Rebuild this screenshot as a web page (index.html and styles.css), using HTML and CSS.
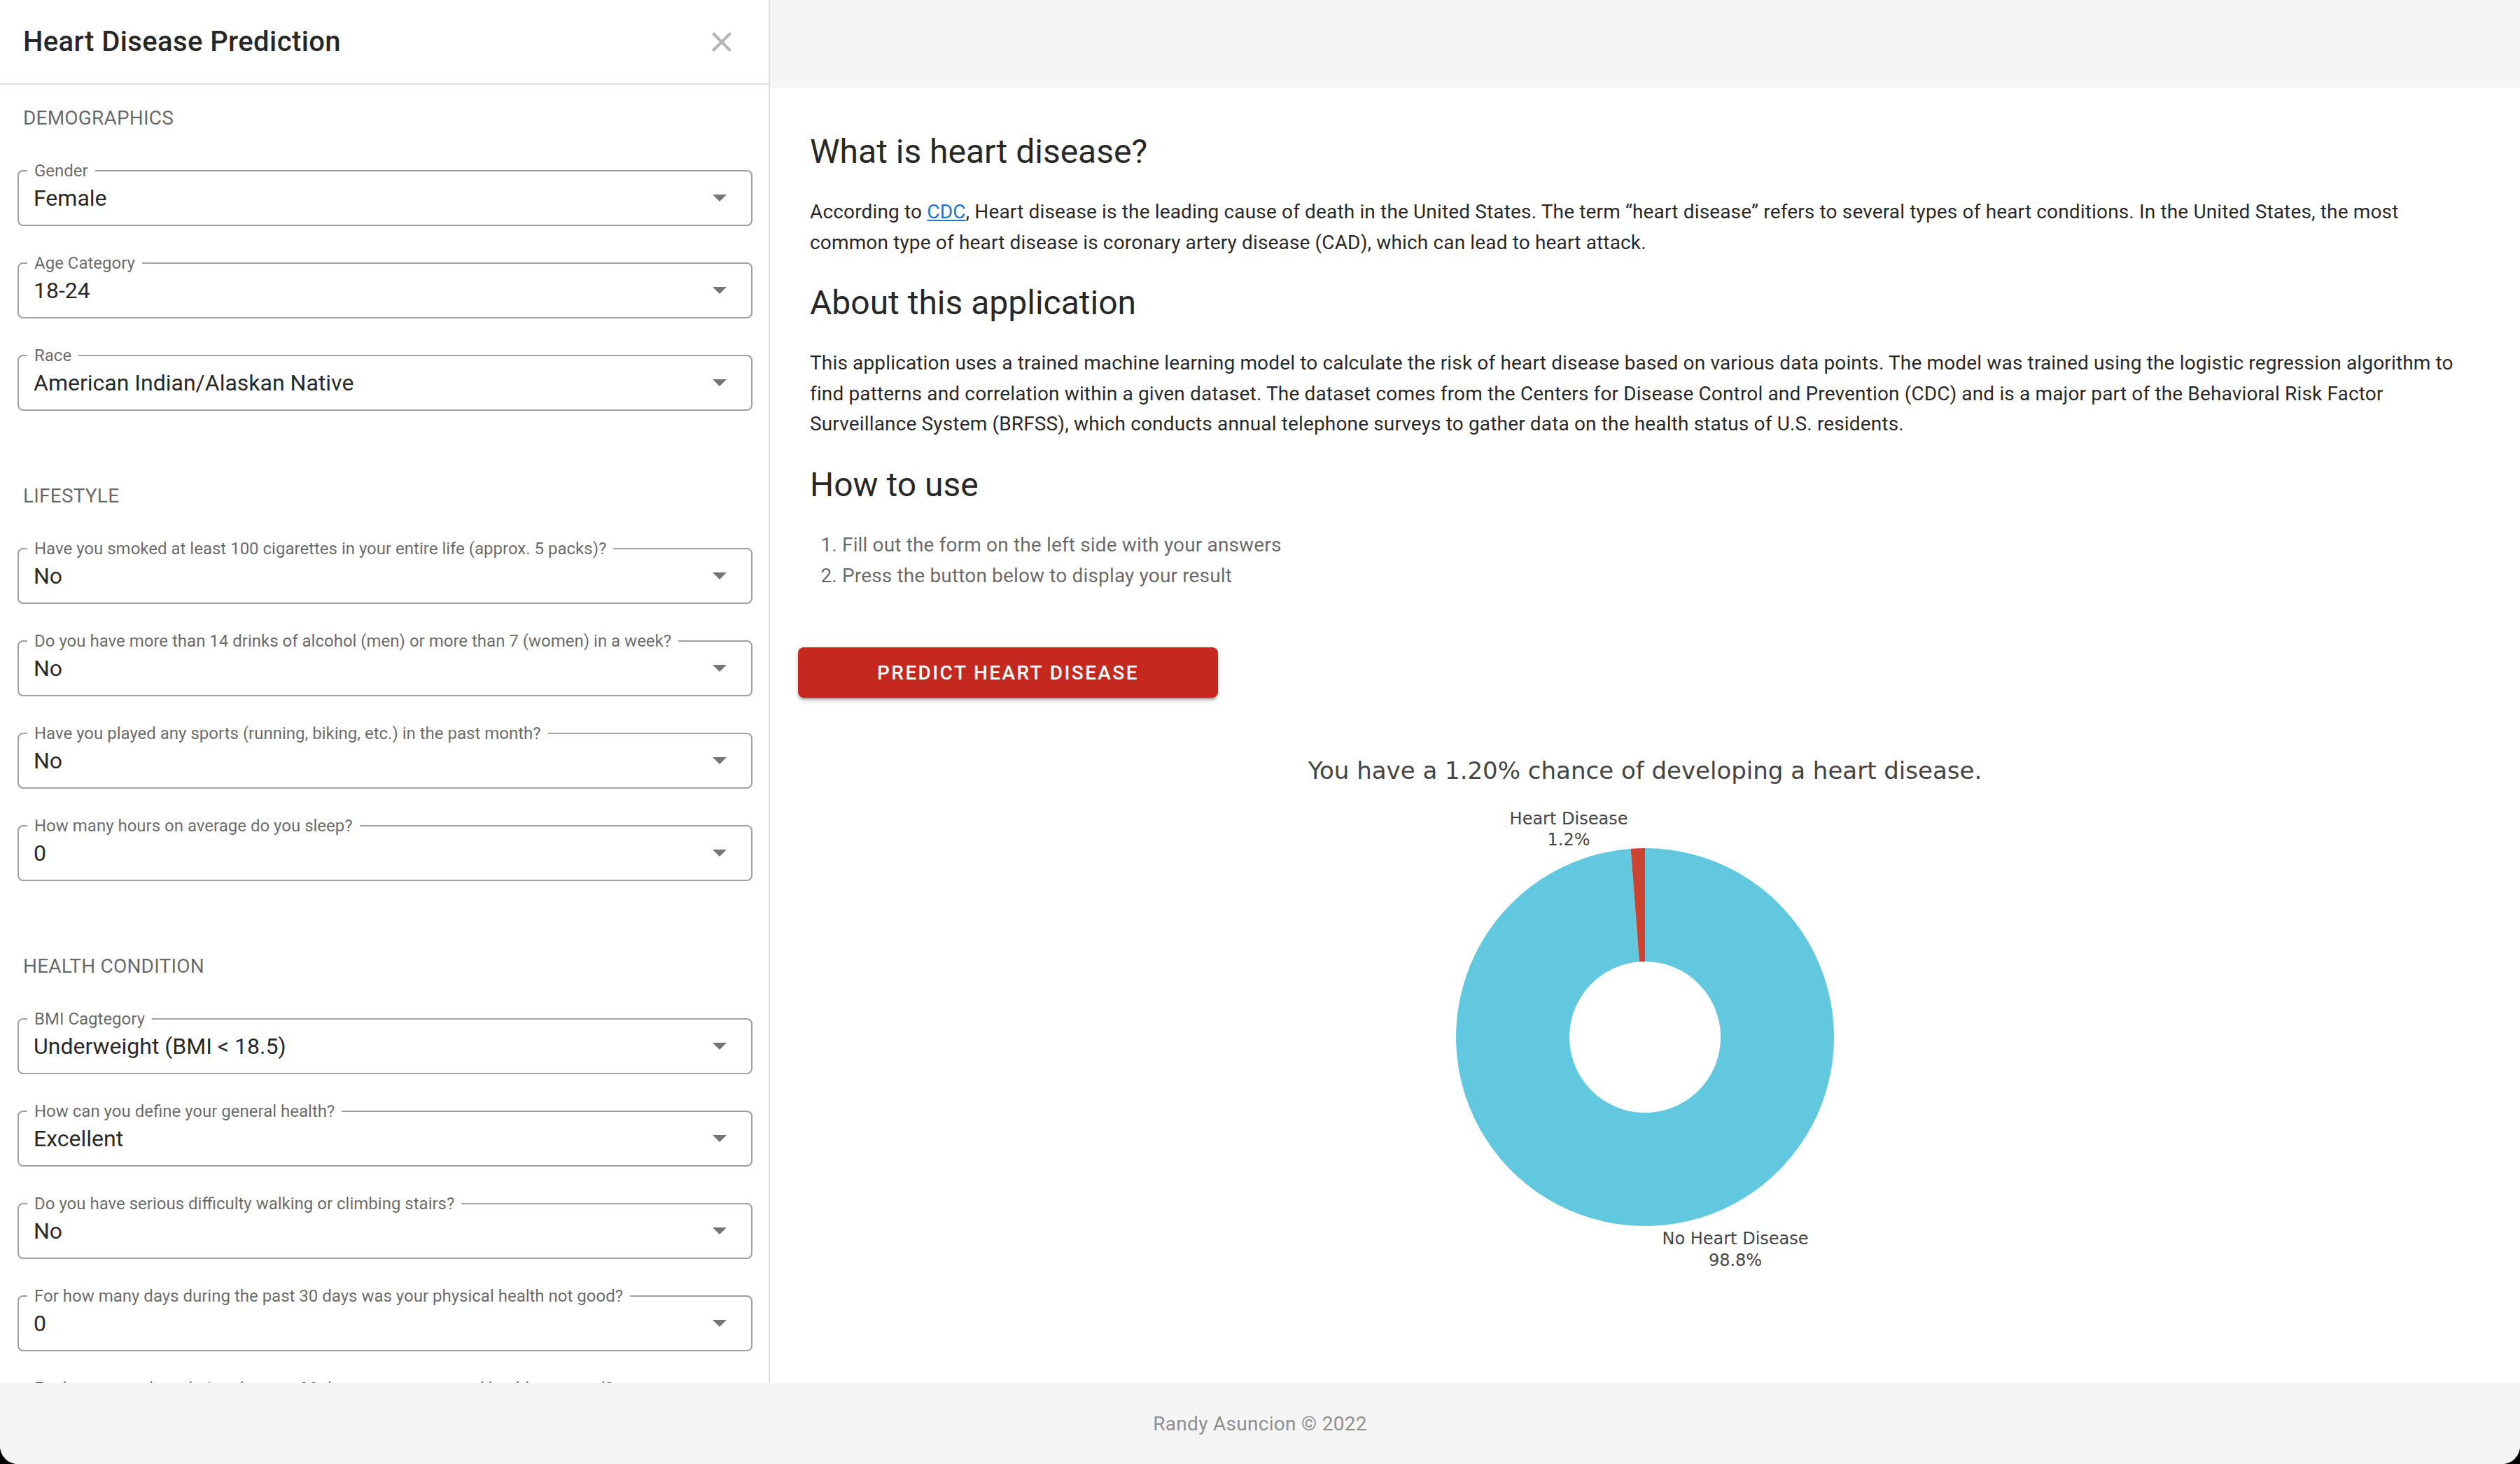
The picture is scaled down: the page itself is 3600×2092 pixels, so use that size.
FILE: index.html
```html
<!DOCTYPE html>
<html lang="en">
<head>
<meta charset="utf-8">
<title>Heart Disease Prediction</title>
<link rel="stylesheet" href="styles.css">
</head>
<body>
<div class="app">
  <div class="layout">
    <aside class="drawer">
      <div class="drawer-header">
        <h1 class="drawer-title">Heart Disease Prediction</h1>
        <button class="close-btn" aria-label="close">
          <svg viewBox="0 0 24 24"><path d="M19 6.41 17.59 5 12 10.59 6.41 5 5 6.41 10.59 12 5 17.59 6.41 19 12 13.41 17.59 19 19 17.59 13.41 12z"/></svg>
        </button>
      </div>
      <div class="drawer-body">
        <section class="form-section">
          <h2 class="section-title">Demographics</h2>
          <div class="field"><span class="field-label">Gender</span><span class="field-value">Female</span><svg class="arrow" viewBox="7 10 10 5"><path d="M7 10l5 5 5-5z"/></svg></div>
          <div class="field"><span class="field-label">Age Category</span><span class="field-value">18-24</span><svg class="arrow" viewBox="7 10 10 5"><path d="M7 10l5 5 5-5z"/></svg></div>
          <div class="field"><span class="field-label">Race</span><span class="field-value">American Indian/Alaskan Native</span><svg class="arrow" viewBox="7 10 10 5"><path d="M7 10l5 5 5-5z"/></svg></div>
        </section>
        <section class="form-section">
          <h2 class="section-title">Lifestyle</h2>
          <div class="field"><span class="field-label">Have you smoked at least 100 cigarettes in your entire life (approx. 5 packs)?</span><span class="field-value">No</span><svg class="arrow" viewBox="7 10 10 5"><path d="M7 10l5 5 5-5z"/></svg></div>
          <div class="field"><span class="field-label">Do you have more than 14 drinks of alcohol (men) or more than 7 (women) in a week?</span><span class="field-value">No</span><svg class="arrow" viewBox="7 10 10 5"><path d="M7 10l5 5 5-5z"/></svg></div>
          <div class="field"><span class="field-label">Have you played any sports (running, biking, etc.) in the past month?</span><span class="field-value">No</span><svg class="arrow" viewBox="7 10 10 5"><path d="M7 10l5 5 5-5z"/></svg></div>
          <div class="field"><span class="field-label">How many hours on average do you sleep?</span><span class="field-value">0</span><svg class="arrow" viewBox="7 10 10 5"><path d="M7 10l5 5 5-5z"/></svg></div>
        </section>
        <section class="form-section">
          <h2 class="section-title">Health Condition</h2>
          <div class="field"><span class="field-label">BMI Cagtegory</span><span class="field-value">Underweight (BMI &lt; 18.5)</span><svg class="arrow" viewBox="7 10 10 5"><path d="M7 10l5 5 5-5z"/></svg></div>
          <div class="field"><span class="field-label">How can you define your general health?</span><span class="field-value">Excellent</span><svg class="arrow" viewBox="7 10 10 5"><path d="M7 10l5 5 5-5z"/></svg></div>
          <div class="field"><span class="field-label">Do you have serious difficulty walking or climbing stairs?</span><span class="field-value">No</span><svg class="arrow" viewBox="7 10 10 5"><path d="M7 10l5 5 5-5z"/></svg></div>
          <div class="field"><span class="field-label">For how many days during the past 30 days was your physical health not good?</span><span class="field-value">0</span><svg class="arrow" viewBox="7 10 10 5"><path d="M7 10l5 5 5-5z"/></svg></div>
          <div class="field"><span class="field-label">For how many days during the past 30 days was your mental health not good?</span><span class="field-value">0</span><svg class="arrow" viewBox="7 10 10 5"><path d="M7 10l5 5 5-5z"/></svg></div>
        </section>
      </div>
    </aside>
    <main class="main">
      <div class="topbar"></div>
      <div class="content">
        <h2 class="heading">What is heart disease?</h2>
        <p class="text">According to <a class="link" href="#">CDC</a>, Heart disease is the leading cause of death in the United States. The term “heart disease” refers to several types of heart conditions. In the United States, the most common type of heart disease is coronary artery disease (CAD), which can lead to heart attack.</p>
        <h2 class="heading">About this application</h2>
        <p class="text">This application uses a trained machine learning model to calculate the risk of heart disease based on various data points. The model was trained using the logistic regression algorithm to find patterns and correlation within a given dataset. The dataset comes from the Centers for Disease Control and Prevention (CDC) and is a major part of the Behavioral Risk Factor Surveillance System (BRFSS), which conducts annual telephone surveys to gather data on the health status of U.S. residents.</p>
        <h2 class="heading">How to use</h2>
        <ol class="steps">
          <li>Fill out the form on the left side with your answers</li>
          <li>Press the button below to display your result</li>
        </ol>
        <button class="predict-btn">Predict Heart Disease</button>
        <svg class="chart" viewBox="0 0 1100 800" width="1100" height="800">
          <text class="chart-title" x="550" y="72">You have a 1.20% chance of developing a heart disease.</text>
          <path class="slice-no" d="M550,171 A270,270 0 1 1 529.66,171.77 L541.86,333.31 A108,108 0 1 0 550,333 Z"/>
          <path class="slice-yes" d="M550,171 A270,270 0 0 0 529.66,171.77 L541.86,333.31 A108,108 0 0 1 550,333 Z"/>
          <text class="chart-label" x="441" y="136.5">Heart Disease</text>
          <text class="chart-label" x="441" y="166.5">1.2%</text>
          <text class="chart-label" x="679" y="737">No Heart Disease</text>
          <text class="chart-label" x="679" y="767.5">98.8%</text>
        </svg>
      </div>
    </main>
  </div>
  <footer class="footer">Randy Asuncion © 2022</footer>
</div>
</body>
</html>
```

FILE: styles.css
```css
html, body {
  margin: 0;
  padding: 0;
  background: #000;
}

body {
  font-family: "Roboto", "Liberation Sans", sans-serif;
  color: rgba(0, 0, 0, 0.87);
}

.app {
  width: 3600px;
  height: 2092px;
  display: flex;
  flex-direction: column;
  background: #fff;
  border-radius: 0 0 26px 26px;
  overflow: hidden;
}

.layout {
  flex: 1;
  display: flex;
  min-height: 0;
}

/* Drawer */
.drawer {
  width: 1100px;
  flex: none;
  box-sizing: border-box;
  border-right: 2px solid #e0e0e0;
  background: #fff;
  overflow: hidden;
}

.drawer-header {
  height: 119px;
  border-bottom: 2px solid #e0e0e0;
  display: flex;
  align-items: center;
  justify-content: space-between;
  padding: 0 27px 0 33px;
}

.drawer-title {
  margin: 0;
  font-size: 40px;
  font-weight: 500;
  letter-spacing: 0.4px;
  line-height: 64px;
}

.close-btn {
  width: 80px;
  height: 80px;
  padding: 16px;
  border: none;
  background: none;
  display: flex;
  align-items: center;
  justify-content: center;
}

.close-btn svg {
  width: 48px;
  height: 48px;
  fill: rgba(0, 0, 0, 0.3);
}

.drawer-body {
  padding-top: 26px;
}

.form-section + .form-section {
  margin-top: 100px;
}

.section-title {
  margin: 0;
  padding-left: 33px;
  font-size: 28px;
  font-weight: 400;
  line-height: 44px;
  letter-spacing: 0.2px;
  text-transform: uppercase;
  color: rgba(0, 0, 0, 0.6);
}

.field {
  position: relative;
  height: 80px;
  box-sizing: border-box;
  margin: 52px 23px 0 25px;
  border: 2px solid #a0a0a0;
  border-radius: 8px;
  display: flex;
  align-items: center;
  padding: 0 35px 0 21px;
}

.field-label {
  position: absolute;
  left: 12px;
  top: -15px;
  padding: 0 10px;
  background: #fff;
  font-size: 24px;
  line-height: 28px;
  color: rgba(0, 0, 0, 0.6);
  white-space: nowrap;
}

.field-value {
  flex: 1;
  font-size: 32px;
  line-height: 46px;
  color: rgba(0, 0, 0, 0.87);
}

.arrow {
  width: 20px;
  height: 10px;
  fill: rgba(0, 0, 0, 0.54);
  flex: none;
}

/* Main */
.main {
  flex: 1;
  min-width: 0;
  display: flex;
  flex-direction: column;
  background: #f5f5f5;
}

.topbar {
  height: 126px;
  flex: none;
}

.content {
  flex: 1;
  background: #fff;
  padding: 59px 57px 0;
  overflow: hidden;
}

.heading {
  margin: 0 0 32px;
  font-size: 48px;
  font-weight: 400;
  line-height: 64px;
  color: rgba(0, 0, 0, 0.87);
}

.text {
  margin: 0 0 33px;
  max-width: 2373px;
  font-size: 28px;
  line-height: 43.6px;
  letter-spacing: 0.15px;
}

.link {
  color: #1976d2;
  text-decoration: underline;
}

.steps {
  margin: 0;
  padding-left: 46px;
  font-size: 28px;
  line-height: 43.6px;
  letter-spacing: 0.15px;
  color: rgba(0, 0, 0, 0.6);
}

.predict-btn {
  display: block;
  width: 600px;
  height: 72px;
  margin: 81px 0 0 -17px;
  border: none;
  border-radius: 8px;
  background: #c4281e;
  color: #fff;
  font-family: "Roboto", "Liberation Sans", sans-serif;
  font-size: 28px;
  font-weight: 500;
  letter-spacing: 2.4px;
  text-transform: uppercase;
  box-shadow: 0 6px 2px -4px rgba(0, 0, 0, 0.2), 0 4px 4px 0 rgba(0, 0, 0, 0.14), 0 2px 10px 0 rgba(0, 0, 0, 0.12);
}

.chart {
  display: block;
  margin: 44px auto 0;
  width: 1100px;
  height: 800px;
}

.chart-title {
  font-family: "DejaVu Sans", "Liberation Sans", sans-serif;
  font-size: 34px;
  fill: #444;
  text-anchor: middle;
}

.chart-label {
  font-family: "DejaVu Sans", "Liberation Sans", sans-serif;
  font-size: 24px;
  fill: #444;
  text-anchor: middle;
}

.slice-no {
  fill: #62c8df;
}

.slice-yes {
  fill: #cc4430;
}

/* Footer */
.footer {
  height: 116px;
  flex: none;
  background: #f5f5f5;
  display: flex;
  align-items: center;
  justify-content: center;
  font-size: 28px;
  letter-spacing: 0.3px;
  color: #8f8f8f;
}
```
